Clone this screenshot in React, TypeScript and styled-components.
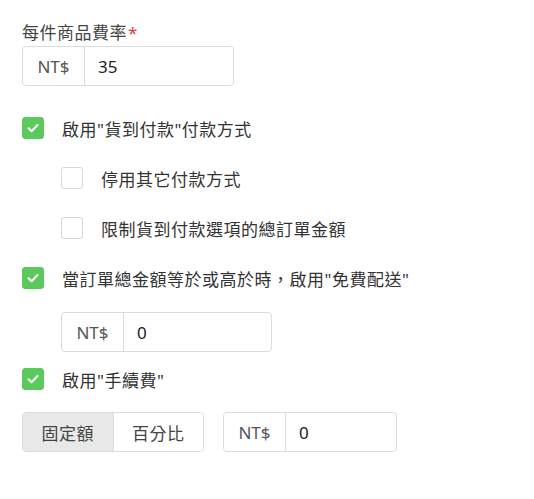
import React from 'react';
import styled, { createGlobalStyle } from 'styled-components';

const GlobalStyle = createGlobalStyle`
  body {
    margin: 0;
    background: #fff;
    font-family: "Noto Sans", "Noto Sans CJK TC", sans-serif;
    color: #333;
  }
`

const Page = styled.div`
  display: flex;
  flex-direction: column;
  align-items: flex-start;
  padding: 22px 0 0 22px;
`

const Label = styled.div`
  font-size: 17px;
  letter-spacing: 0.5px;
  line-height: 22px;
  margin-bottom: 2px;
  color: #444;
`

const Required = styled.span`
  color: #e03c3c;
  margin-left: 1px;
`

const InputGroup = styled.div<{ $width: number; $indent?: number }>`
  display: flex;
  width: ${p => p.$width}px;
  height: 40px;
  box-sizing: border-box;
  border: 1px solid #dcdcdc;
  border-radius: 4px;
  margin-left: ${p => p.$indent || 0}px;
  font-size: 17px;
`

const Addon = styled.div`
  width: 61px;
  display: flex;
  align-items: center;
  justify-content: center;
  border-right: 1px solid #dcdcdc;
  color: #555;
`

const Value = styled.div`
  display: flex;
  align-items: center;
  padding-left: 13px;
  color: #222;
`

const CheckRow = styled.div<{ $indent?: number; $top: number }>`
  display: flex;
  align-items: center;
  height: 22px;
  margin-top: ${p => p.$top}px;
  margin-left: ${p => p.$indent || 0}px;
`

const Box = styled.div<{ $checked?: boolean }>`
  width: 22px;
  height: 22px;
  box-sizing: border-box;
  border-radius: 3px;
  display: flex;
  align-items: center;
  justify-content: center;
  background: ${p => (p.$checked ? '#5cc95c' : '#fff')};
  border: 1px solid ${p => (p.$checked ? '#5cc95c' : '#d8d8d8')};
`

const CheckText = styled.span`
  margin-left: 18px;
  font-size: 17px;
  letter-spacing: 0.5px;
  color: #333;
`

const Stack = styled.div<{ $top: number }>`
  margin-top: ${p => p.$top}px;
  display: flex;
  gap: 19px;
`

const Segmented = styled.div`
  display: flex;
  width: 182px;
  height: 40px;
  box-sizing: border-box;
  border: 1px solid #dcdcdc;
  border-radius: 4px;
  overflow: hidden;
`

const Segment = styled.div<{ $active?: boolean }>`
  flex: 1;
  display: flex;
  align-items: center;
  justify-content: center;
  font-size: 17px;
  letter-spacing: 0.5px;
  color: #444;
  background: ${p => (p.$active ? '#e8e8e8' : '#fff')};
  & + & {
    border-left: 1px solid #dcdcdc;
  }
`

function Check({ checked }: { checked?: boolean }) {
  return (
    <Box $checked={checked}>
      {checked && (
        <svg width="14" height="14" viewBox="0 0 14 14">
          <path d="M2.5 7.2 L5.6 10.2 L11.5 4" fill="none" stroke="#fff" strokeWidth="2" strokeLinecap="round" strokeLinejoin="round" />
        </svg>
      )}
    </Box>
  );
}

export default function App() {
  return (
    <>
      <GlobalStyle />
      <Page>
        <Label>每件商品費率<Required>*</Required></Label>
        <InputGroup $width={212}>
          <Addon>NT$</Addon>
          <Value>35</Value>
        </InputGroup>

        <CheckRow $top={31}>
          <Check checked />
          <CheckText>啟用"貨到付款"付款方式</CheckText>
        </CheckRow>
        <CheckRow $top={28} $indent={39}>
          <Check />
          <CheckText>停用其它付款方式</CheckText>
        </CheckRow>
        <CheckRow $top={28} $indent={39}>
          <Check />
          <CheckText>限制貨到付款選項的總訂單金額</CheckText>
        </CheckRow>
        <CheckRow $top={28}>
          <Check checked />
          <CheckText>當訂單總金額等於或高於時，啟用"免費配送"</CheckText>
        </CheckRow>

        <Stack $top={23}>
          <InputGroup $width={211} $indent={39}>
            <Addon>NT$</Addon>
            <Value>0</Value>
          </InputGroup>
        </Stack>

        <CheckRow $top={16}>
          <Check checked />
          <CheckText>啟用"手續費"</CheckText>
        </CheckRow>

        <Stack $top={22}>
          <Segmented>
            <Segment $active>固定額</Segment>
            <Segment>百分比</Segment>
          </Segmented>
          <InputGroup $width={174}>
            <Addon>NT$</Addon>
            <Value>0</Value>
          </InputGroup>
        </Stack>
      </Page>
    </>
  );
}
